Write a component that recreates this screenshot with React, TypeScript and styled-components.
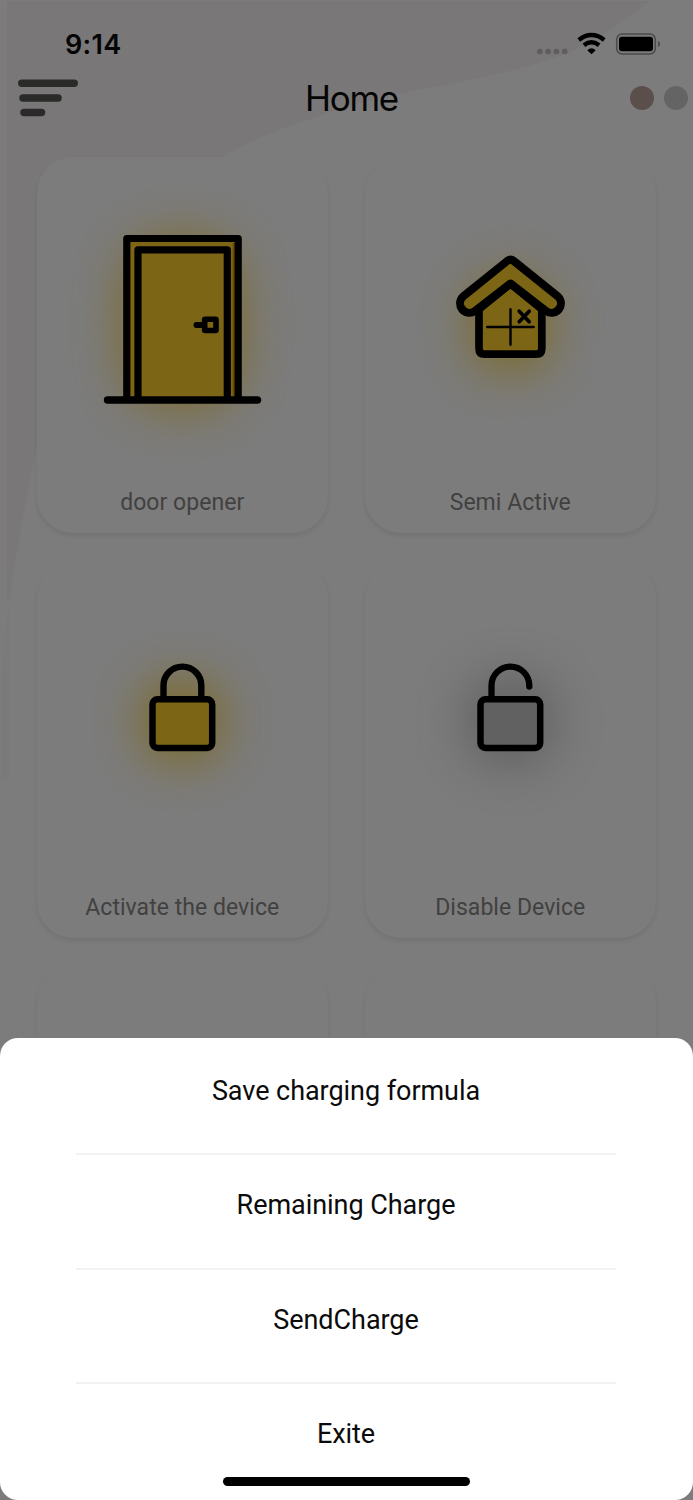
import React from 'react';
import styled, { createGlobalStyle } from 'styled-components';

const GlobalStyle = createGlobalStyle`
  * { box-sizing: border-box; }
  body { margin: 0; background: #7c7c7c; }
`;

const Screen = styled.div`
  position: relative;
  width: 693px;
  height: 1500px;
  overflow: hidden;
  background: #7c7c7c;
  font-family: Roboto, "Liberation Sans", sans-serif;
`;

const Backdrop = styled.svg`
  position: absolute;
  inset: 0;
  display: block;
`;

const Content = styled.div`
  position: relative;
  display: flex;
  flex-direction: column;
`;

const StatusBar = styled.div`
  height: 73px;
  padding: 0 33px 0 65px;
  display: flex;
  justify-content: space-between;
`;

const Time = styled.div`
  font: 600 27px/33px Inter, sans-serif;
  letter-spacing: 0.3px;
  padding-top: 28px;
  color: #050505;
`;

const StatusIcons = styled.svg`
  display: block;
  margin-top: 28px;
`;

const Header = styled.header`
  height: 83.5px;
  padding: 5px 5px 0 18px;
  display: grid;
  grid-template-columns: 1fr auto 1fr;
  align-items: start;
`;

const MenuIcon = styled.svg`
  display: block;
`;

const Title = styled.h1`
  margin: 0;
  font: 400 35px/40px Inter, sans-serif;
  letter-spacing: -1.3px;
  color: #050505;
  transform: translateX(-1.5px);
`;

const Dots = styled.div`
  display: flex;
  justify-content: flex-end;
  gap: 10px;
  padding-top: 8px;
`;

const Dot = styled.span<{ $color: string }>`
  width: 24px;
  height: 24px;
  border-radius: 50%;
  background: ${(p) => p.$color};
`;

const Grid = styled.main`
  display: grid;
  grid-template-columns: 291.5px 291.5px;
  grid-auto-rows: 376.5px;
  gap: 28.5px 36.5px;
  padding-left: 36.5px;
`;

const Card = styled.section`
  display: flex;
  flex-direction: column;
  align-items: center;
  border-radius: 36px;
  background: #7c7c7c;
  box-shadow: 0 3px 5px rgba(0, 0, 0, 0.08);
`;

const Art = styled.svg`
  display: block;
  flex: none;
  overflow: visible;
`;

const Label = styled.div`
  margin-top: 2px;
  font-size: 23px;
  line-height: 28px;
  letter-spacing: 0.04px;
  color: #414141;
  white-space: nowrap;
`;

const Sheet = styled.div`
  position: absolute;
  left: 0;
  right: 0;
  bottom: 0;
  height: 462.5px;
  padding: 3px 77px 0 76px;
  border-radius: 18px;
  background: #fff;
`;

const SheetItem = styled.div`
  height: 114.5px;
  padding-top: 33.4px;
  text-align: center;
  font-size: 27px;
  line-height: 34px;
  letter-spacing: -0.05px;
  color: #0b0b0b;
  border-bottom: 2px solid #f2f2f2;
  &:last-of-type { border-bottom: 0; }
`;

const HomeIndicator = styled.span`
  position: absolute;
  left: 223px;
  bottom: 14px;
  width: 247px;
  height: 9px;
  border-radius: 5px;
  background: #000;
`;

const GOLD = '#7c6514';

function DoorArt() {
  return (
    <Art width="291.5" height="330" viewBox="37 157 291.5 330" fill="none" stroke="#000">
      <defs>
        <filter id="doorGlow" x="-100%" y="-100%" width="300%" height="300%" colorInterpolationFilters="sRGB">
          <feGaussianBlur stdDeviation="25" />
        </filter>
      </defs>
      <rect x="122" y="236" width="120" height="174" rx="50" fill="#7c6514" stroke="none" opacity="0.75" filter="url(#doorGlow)" />
      <rect x="127" y="239" width="111" height="160" fill={GOLD} stroke="none" />
      <path d="M234 243v155" stroke="#694903" strokeWidth="2.5" />
      <path d="M126.8 400V238.5H238.2V400M138 400V249.8H227.3V400" strokeWidth="7.2" strokeLinejoin="round" />
      <path d="M107.5 400H257.5" strokeWidth="7.4" strokeLinecap="round" />
      <path d="M196.5 325H203" strokeWidth="6" strokeLinecap="round" />
      <rect x="204.7" y="319.2" width="11.3" height="11.3" rx="0.5" strokeWidth="5.6" strokeLinejoin="round" />
    </Art>
  );
}

function HouseArt() {
  return (
    <Art width="291.5" height="330" viewBox="364.8 156.8 291.5 330" fill="none" stroke="#000">
      <defs>
        <filter id="houseGlow" x="-150%" y="-150%" width="400%" height="400%" colorInterpolationFilters="sRGB">
          <feGaussianBlur stdDeviation="25" />
        </filter>
      </defs>
      <path d="M510 268l51 44-16 6v50h-70v-50l-16-6z" fill="#7c6514" stroke="none" opacity="0.85" filter="url(#houseGlow)" />
      <path d="M478.8 309L510.3 283.5 541.6 309V348.3Q541.6 354 535.9 354H484.5Q478.8 354 478.8 348.3Z" fill={GOLD} strokeWidth="7.7" strokeLinejoin="round" />
      <path d="M507 260.8Q510.3 258.2 513.6 260.8L557.6 296.2A9.4 9.4 0 0 1 546.4 311.2L510.3 283.3 474.2 311.2A9.4 9.4 0 0 1 463 296.2Z" fill={GOLD} strokeWidth="8" strokeLinejoin="round" />
      <path d="M487 326.8H533.5M510.3 309V344.5" strokeWidth="2.4" strokeLinecap="round" />
      <path d="M519 311L529 321.5M529 311L519 321.5" strokeWidth="3.7" strokeLinecap="round" />
    </Art>
  );
}

function LockArt({ open = false }: { open?: boolean }) {
  const id = open ? 'openGlow' : 'closedGlow';
  return (
    <Art width="291.5" height="330" viewBox="37 562 291.5 330" fill="none" stroke="#000">
      <defs>
        <filter id={id} x="-200%" y="-200%" width="500%" height="500%" colorInterpolationFilters="sRGB">
          <feGaussianBlur stdDeviation={open ? 27 : 25} />
        </filter>
      </defs>
      <rect x="142" y="680" width="80" height="82" rx="30" fill={open ? '#505050' : '#7c6514'} stroke="none" opacity={open ? 0.75 : 0.82} filter={`url(#${id})`} />
      <rect x="152.5" y="699.3" width="59.7" height="48.7" rx="5" fill={open ? '#616161' : GOLD} strokeWidth="6.5" />
      {open ? (
        <path d="M163.5 698V685.5A18.9 18.9 0 0 1 201.3 685.5V686.5" strokeWidth="6.3" strokeLinecap="round" />
      ) : (
        <path d="M163.5 698V685.5A18.9 18.9 0 0 1 201.3 685.5V698" strokeWidth="6.4" />
      )}
    </Art>
  );
}

const actions = ['Save charging formula', 'Remaining Charge', 'SendCharge', 'Exite'];

export default function App() {
  return (
    <>
      <GlobalStyle />
      <Screen>
        <Backdrop width="693" height="1500" viewBox="0 0 693 1500">
          <path d="M7 1H650C610 32 585 48 548 60C480 82 410 88 345 107C290 125 250 139 223 157C130 225 70 320 34 460C24 510 16 555 9 600H7Z" fill="#7a7778" />
          <path d="M9 600Q3 640 1.5 690V780H9Z" fill="#7a7a7a" />
        </Backdrop>
        <Content>
          <StatusBar>
            <Time>9:14</Time>
            <StatusIcons width="124" height="32" viewBox="536 28 124 32" fill="none">
              <g fill="#5f5d5e">
                <rect x="537" y="48.8" width="5.6" height="5.4" rx="2" />
                <rect x="545.3" y="48.8" width="5.6" height="5.4" rx="2" />
                <rect x="553.6" y="48.8" width="5.6" height="5.4" rx="2" />
                <rect x="561.9" y="48.8" width="5.6" height="5.4" rx="2" />
              </g>
              <path d="M578.8 40Q591.5 30.2 604.2 40M583.9 45.2Q591.5 39.4 599.1 45.2" stroke="#000" strokeWidth="4.4" />
              <path d="M587.3 50.2Q591.5 46.2 595.7 50.2L591.5 54.3Z" fill="#000" />
              <rect x="616.7" y="34" width="38.6" height="20" rx="5.5" stroke="#4b4b4b" strokeWidth="1.5" />
              <rect x="619" y="36.8" width="34" height="14.4" rx="3" fill="#000" />
              <path d="M658 41Q660.2 42 660.2 44T658 47Z" fill="#4b4b4b" />
            </StatusIcons>
          </StatusBar>
          <Header>
            <MenuIcon width="60" height="40" viewBox="18 78 60 40" stroke="#2a2a29" strokeWidth="7.5" strokeLinecap="round">
              <path d="M21.8 83.3H74.2M23 98H58M24 112.5H41.5" />
            </MenuIcon>
            <Title>Home</Title>
            <Dots>
              <Dot $color="#5a4f4b" />
              <Dot $color="#646464" />
            </Dots>
          </Header>
          <Grid>
            <Card><DoorArt /><Label>door opener</Label></Card>
            <Card><HouseArt /><Label>Semi Active</Label></Card>
            <Card><LockArt /><Label>Activate the device</Label></Card>
            <Card><LockArt open /><Label>Disable Device</Label></Card>
            <Card />
            <Card />
          </Grid>
        </Content>
        <Sheet>
          {actions.map((action) => <SheetItem key={action}>{action}</SheetItem>)}
          <HomeIndicator />
        </Sheet>
      </Screen>
    </>
  );
}
